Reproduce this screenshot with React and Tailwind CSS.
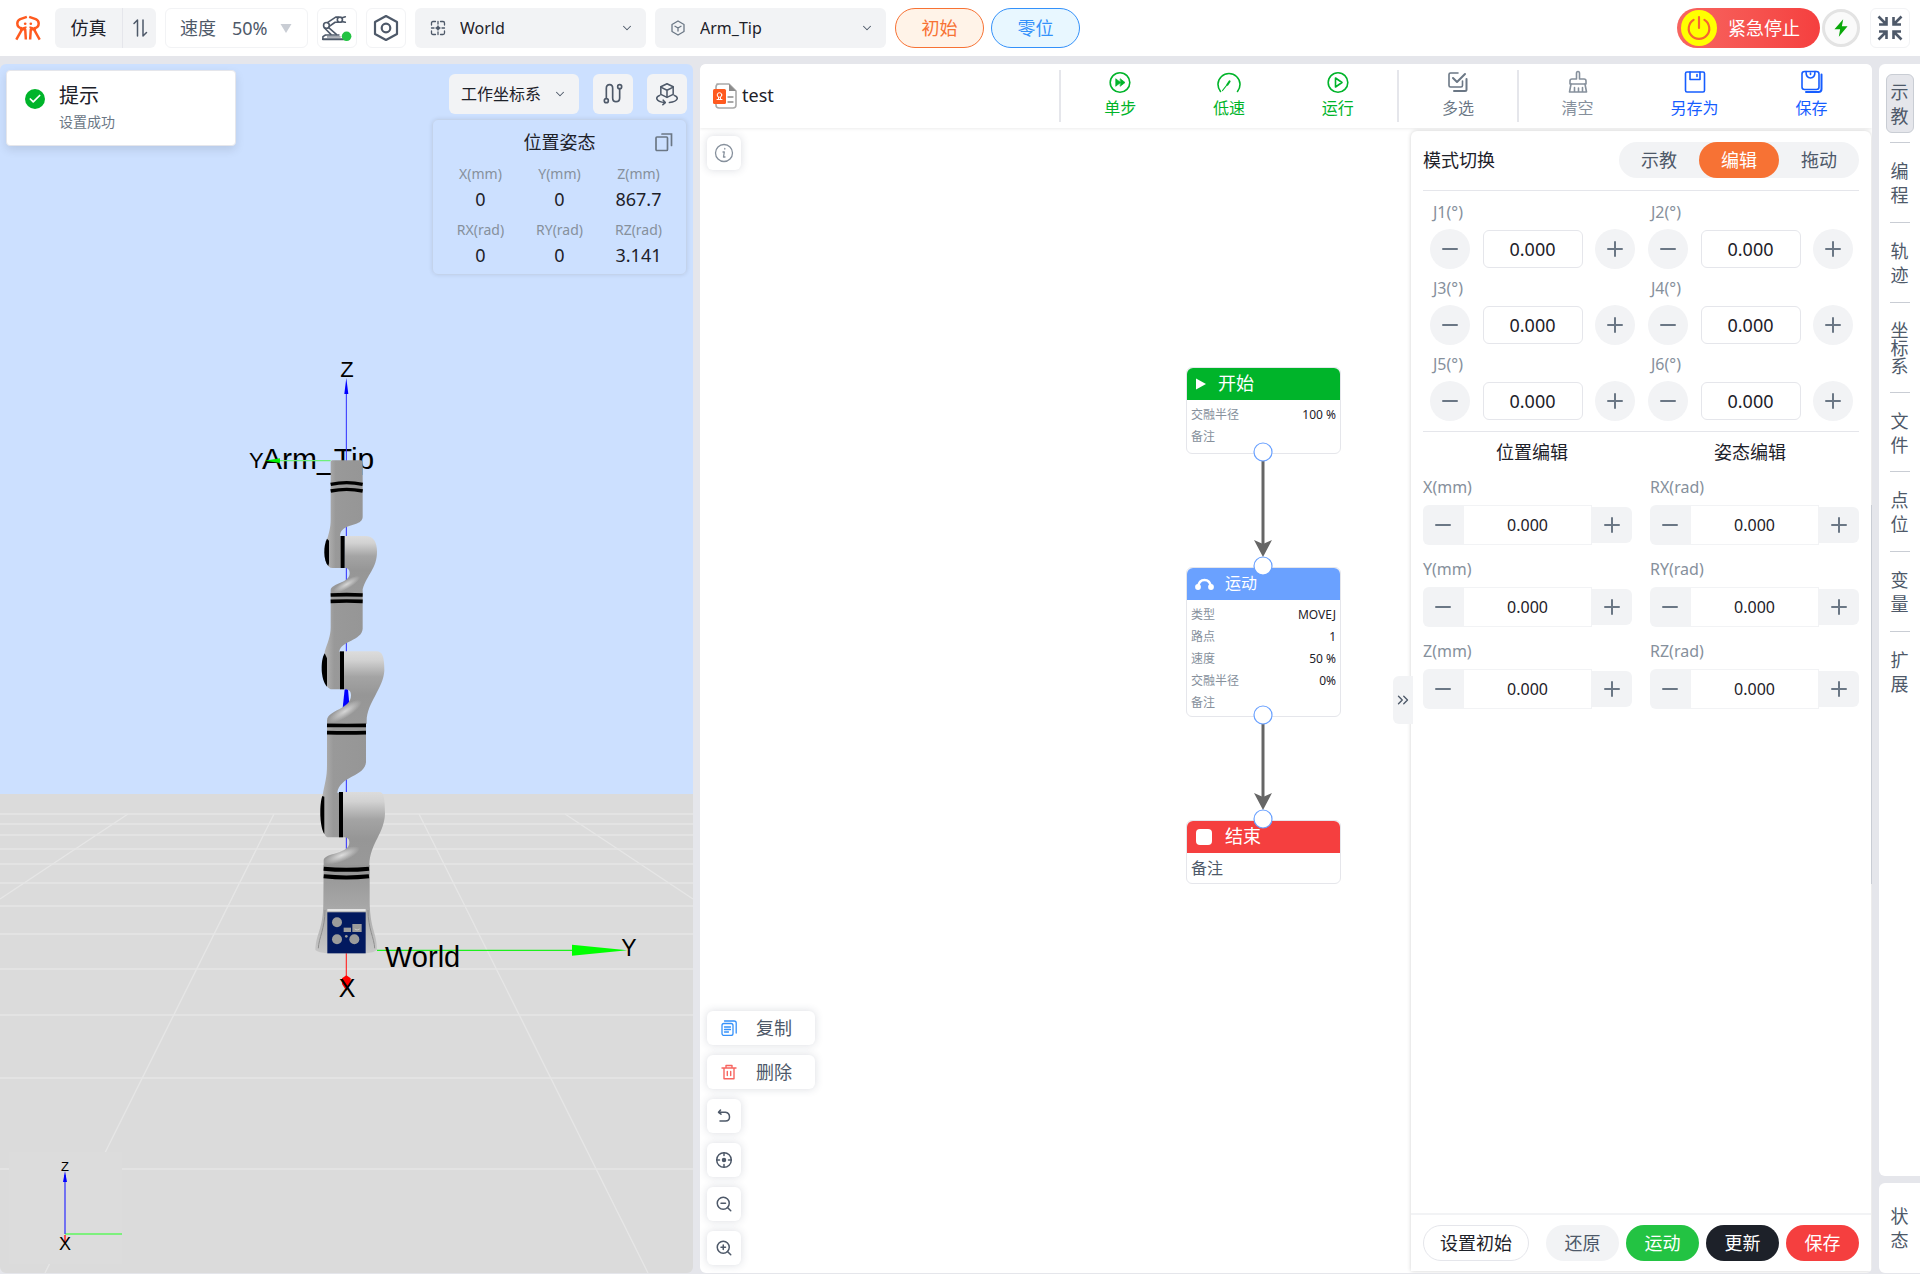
import React, { useState } from "react";
import { ChevronDown, ChevronsRight, Minus, Plus, Check, ZoomIn, ZoomOut } from "lucide-react";

const svgProps = {
  fill: "none",
  stroke: "currentColor",
  strokeLinecap: "round",
  strokeLinejoin: "round",
  "aria-hidden": true,
};

/* ---------- icons ---------- */

function Logo() {
  const half = (
    <>
      <path d="M81 49 L61 56 Q52 60 52 69 Q52 81 66 84" />
      <path d="M60 87 H76 L78 118" />
      <path d="M66 88 L49 118" />
    </>
  );
  return (
    <svg viewBox="42 42 85 82" className="h-7 w-7 text-[#ff5a1f]" {...svgProps} strokeWidth="7.500" strokeLinecap="butt">
      {half}
      <g transform="translate(169 0) scale(-1 1)">{half}</g>
      <path d="M64 85 L80 80 M105 85 L89 80" strokeWidth="5" />
      <circle cx="76" cy="70" r="4" fill="currentColor" stroke="none" />
      <circle cx="93" cy="70" r="4" fill="currentColor" stroke="none" />
    </svg>
  );
}

function SwapIcon() {
  return (
    <svg viewBox="0 0 20 20" className="h-5 w-5" {...svgProps} strokeWidth="1.500">
      <path d="M4 5.500 L7.500 2 V18" />
      <path d="M13 2 V18 L16.500 14.500" />
    </svg>
  );
}

function ArmIcon() {
  return (
    <svg viewBox="970 42 100 84" className="h-7 w-8 text-[#4e5969]" {...svgProps} strokeWidth="5">
      <circle cx="987" cy="76" r="9" />
      <path d="M990 67 L1016 50 H1024 M996 79 L1014 66 H1024" />
      <circle cx="1029" cy="58" r="8" />
      <path d="M1036 52 L1046 49 M1036 64 L1046 66" />
      <path d="M981 84 L1001 104 M994 83 L1018 104" />
      <path d="M976 118 V111 L984 106 H1026" />
      <path d="M976 119 H1040" strokeWidth="6" />
      <path d="M990 112 H1030" strokeWidth="3" />
      <circle cx="1050" cy="110" r="15" fill="#23c343" stroke="none" />
    </svg>
  );
}

function NutIcon() {
  return (
    <svg viewBox="0 0 28 28" className="h-7 w-7 text-[#4e5969]" {...svgProps} strokeWidth="2.200">
      <path d="M14 2 L25 8 V20 L14 26 L3 20 V8 Z" />
      <circle cx="14" cy="14" r="4.300" />
    </svg>
  );
}

function WorldIcon() {
  return (
    <svg viewBox="0 0 16 16" className="h-4 w-4 shrink-0 text-[#4e5969]" {...svgProps} strokeWidth="1.300">
      <path d="M1.500 5 V3 Q1.500 1.500 3 1.500 H5.500 M10.500 1.500 H13 Q14.500 1.500 14.500 3 V5 M14.500 11 V13 Q14.500 14.500 13 14.500 H10.500 M5.500 14.500 H3 Q1.500 14.500 1.500 13 V11" />
      <path d="M8 1.500 V4 M8 12 V14.500 M1.500 8 H4 M12 8 H14.500 M8 6 V10 M6 8 H10" />
      <circle cx="8" cy="8" r="1.200" fill="currentColor" />
    </svg>
  );
}

function HexCubeIcon() {
  return (
    <svg viewBox="0 0 16 16" className="h-4 w-4 shrink-0 text-[#6b7785]" {...svgProps} strokeWidth="1.300">
      <path d="M8 1 L14 4.500 V11.500 L8 15 L2 11.500 V4.500 Z" />
      <path d="M5 6.300 L8 8 L11 6.300 M8 8 V11" />
    </svg>
  );
}

function PathIcon() {
  return (
    <svg viewBox="606 70 66 66" className="h-[22px] w-[22px] text-[#4e5969]" {...svgProps} strokeWidth="5">
      <circle cx="619" cy="123" r="6" />
      <circle cx="659" cy="81" r="6" />
      <path d="M619 116 V86 Q619 75 629 75 Q638 75 638 86 V115 Q638 126 648 126 Q659 126 659 115 V88" />
    </svg>
  );
}

function OrbitIcon() {
  return (
    <svg viewBox="766 68 70 70" className="h-6 w-6 text-[#4e5969]" {...svgProps} strokeWidth="4.500">
      <path d="M801 73 L819 82 V104 L801 113 L783 104 V82 Z" />
      <path d="M783 83 L801 92 L819 83 M801 92 V112" />
      <path d="M780 107 Q770 111 771 117 Q775 127 795 128" />
      <path d="M822 107 Q832 111 831 117 Q827 126 808 128" />
      <path d="M790 121 L796 128 L789 134" />
    </svg>
  );
}

function CopyIcon() {
  return (
    <svg viewBox="0 0 20 20" className="h-5 w-5" {...svgProps} strokeWidth="1.700" strokeLinejoin="miter">
      <rect x="2" y="5" width="11.500" height="13.500" rx="1" />
      <path d="M8 2 H17.500 V13.500" />
    </svg>
  );
}

function FileIcon() {
  return (
    <svg viewBox="0 0 24 26" className="h-[26px] w-6" {...svgProps}>
      <path d="M4 1 H16 L23 8 V22 Q23 25 20 25 H6 Q3 25 3 22 V4 Q3 1 6 1" stroke="#a9a9a9" strokeWidth="1.600" fill="#fff" />
      <path d="M16 1 V8 H23 Z" fill="#8c8c8c" stroke="none" />
      <path d="M15 14 H20 M15 19 H20" stroke="#8c8c8c" strokeWidth="1.300" />
      <rect x="0" y="6" width="13" height="15" rx="1.500" fill="#ff5a1f" stroke="none" />
      <circle cx="6.500" cy="12" r="2.300" stroke="#fff" strokeWidth="1" />
      <path d="M4 16.500 H9 M5.500 14.500 V16 M7.500 14.500 V16" stroke="#fff" strokeWidth="1" />
    </svg>
  );
}

function ToolIcon({ children }) {
  return (
    <svg viewBox="0 0 24 24" className="h-6 w-6" {...svgProps} strokeWidth="1.600">
      {children}
    </svg>
  );
}

const toolIcons = {
  step: (
    <ToolIcon>
      <circle cx="12" cy="12.500" r="9.800" />
      <path d="M8 9 L12.500 12.500 L8 16 Z M12.500 9 L17 12.500 L12.500 16 Z" fill="currentColor" strokeWidth="0.800" />
    </ToolIcon>
  ),
  slow: (
    <ToolIcon>
      <path d="M3.500 21.500 A 11 11 0 1 1 20.500 21.500" />
      <path d="M5.500 20.500 L11.500 13" strokeWidth="1.200" />
      <path d="M10.500 14.500 L12.500 11.500" strokeWidth="2.200" />
    </ToolIcon>
  ),
  run: (
    <ToolIcon>
      <circle cx="12" cy="12.500" r="9.800" />
      <path d="M9.500 8 L16 12.500 L9.500 17 Z" />
    </ToolIcon>
  ),
  multi: (
    <ToolIcon>
      <path d="M12 3 H4.500 Q3 3 3 4.500 V15.500 Q3 17 4.500 17 H15 Q16.500 17 16.500 15.500 V11" />
      <path d="M7 8 L11 12 L19 4" strokeWidth="2" />
      <path d="M20.500 9 V19.500 Q20.500 21 19 21 H8" strokeWidth="2" />
    </ToolIcon>
  ),
  clear: (
    <ToolIcon>
      <path d="M10.500 9 V3.500 Q10.500 1.500 12 1.500 Q13.500 1.500 13.500 3.500 V9 H18 Q20 9 20 11 V14 H4 V11 Q4 9 6 9 Z" />
      <path d="M5 14 L3.500 22 H20.500 L19 14 M8.500 22 V17.500 M12.500 22 V18 M16.500 22 V17.500" />
    </ToolIcon>
  ),
  saveAs: (
    <ToolIcon>
      <rect x="2.500" y="2" width="19" height="20" rx="1.500" />
      <path d="M7 2 V9.500 H17 V2 M14 4.500 V6.500" />
    </ToolIcon>
  ),
  save: (
    <ToolIcon>
      <rect x="2" y="1.500" width="17" height="18" rx="2.500" />
      <path d="M6 1.500 Q6 8 10.500 8 Q15 8 15 1.500 M10.500 3 V4.500" />
      <path d="M21.500 4.500 V19 Q21.500 22 18.500 22 H6" strokeWidth="2" />
    </ToolIcon>
  ),
};

/* ---------- small shared controls ---------- */

function Select({ label, icon, options, className, textClass }) {
  return (
    <label className={`flex h-10 items-center rounded-md bg-[#f2f3f5] ${className}`}>
      {icon}
      <select aria-label={label} className={`min-w-0 flex-1 appearance-none bg-transparent text-base leading-6 text-[#1d2129] outline-none ${textClass}`}>
        {options.map((o) => (
          <option key={o}>{o}</option>
        ))}
      </select>
      <ChevronDown className="h-3.5 w-3.5 shrink-0 text-[#4e5969]" strokeWidth={1.8} />
    </label>
  );
}

/* ---------- header ---------- */

function Header() {
  return (
    <header className="flex h-14 items-center bg-white pr-[10px] pl-[14px]">
      <Logo />
      <div className="ml-[13px] flex h-10 w-[101px] rounded-md bg-[#f2f3f5]">
        <button className="w-[68px] border-r border-[#e5e6eb] text-lg text-[#1d2129]">仿真</button>
        <button aria-label="切换" className="flex flex-1 items-center justify-center text-[#4e5969]">
          <SwapIcon />
        </button>
      </div>
      <label className="ml-[9px] flex h-10 w-[143px] items-center rounded-md border border-[#f2f3f5] pl-[14px] text-lg text-[#4e5969]">
        速度
        <select aria-label="速度" className="ml-4 w-12 appearance-none bg-transparent outline-none">
          <option>50%</option>
          <option>100%</option>
        </select>
        <svg viewBox="0 0 12 9" className="h-[9px] w-3" fill="#c9cdd4" aria-hidden="true">
          <path d="M0.500 0 H11.500 L6 9 Z" />
        </svg>
      </label>
      <button aria-label="机械臂" className="ml-[9px] flex h-10 w-10 items-center justify-center rounded-md border border-[#f2f3f5]">
        <ArmIcon />
      </button>
      <button aria-label="设置" className="ml-[9px] flex h-10 w-10 items-center justify-center rounded-md border border-[#f2f3f5]">
        <NutIcon />
      </button>
      <Select label="工作坐标系选择" icon={<WorldIcon />} options={["World"]} className="ml-[9px] w-[231px] pr-3 pl-[15px]" textClass="ml-[14px]" />
      <Select label="工具坐标系选择" icon={<HexCubeIcon />} options={["Arm_Tip"]} className="ml-[9px] w-[231px] pr-3 pl-[15px]" textClass="ml-[14px]" />
      <button className="ml-[9px] h-10 w-[89px] rounded-full border border-[#f77234] bg-[#fff3e8] text-lg text-[#f77234]">初始</button>
      <button className="ml-[7px] h-10 w-[89px] rounded-full border border-[#3491fa] bg-[#e8f7ff] text-lg text-[#3491fa]">零位</button>

      <button className="ml-auto flex h-10 w-[143px] items-center rounded-full bg-linear-to-r from-[#f76560] to-[#f53f3f] pl-1 text-lg text-white">
        <span className="flex h-9 w-9 items-center justify-center rounded-full bg-[#ffff00]">
          <svg viewBox="0 0 24 24" className="h-[26px] w-[26px] text-[#f7652f]" {...svgProps} strokeWidth="2">
            <path d="M12 2 V12 M7 4.500 A 9.500 9.500 0 1 0 17 4.500" />
          </svg>
        </span>
        <span className="ml-[11px]">紧急停止</span>
      </button>
      <button aria-label="上电" className="ml-0.5 flex h-[38px] w-[38px] items-center justify-center rounded-full border-[3px] border-[#e3e3e3] bg-[#fafafa]">
        <svg viewBox="0 0 16 20" className="h-[18px] w-[14px]" fill="#0aa80a" aria-hidden="true">
          <path d="M10.500 0 L0.500 11.500 H7 L5.500 20 L15.500 8 H9 Z" />
        </svg>
      </button>
      <button aria-label="退出全屏" className="ml-[10px] flex h-10 w-10 items-center justify-center rounded-md border border-[#f2f3f5]">
        <svg viewBox="0 0 26 26" className="h-[26px] w-[26px] text-[#4e5969]" {...svgProps} strokeWidth="2.600" strokeLinecap="butt" strokeLinejoin="miter">
          <path d="M1.500 1.500 L9 9 M9.500 2 V9.500 H2 M24.500 1.500 L17 9 M16.500 2 V9.500 H24 M1.500 24.500 L9 17 M2 16.500 H9.500 V24 M24.500 24.500 L17 17 M24 16.500 H16.500 V24" />
        </svg>
      </button>
    </header>
  );
}

/* ---------- 3D scene ---------- */

function Bands({ x1, x2, ys, w, bow }) {
  return ys.map((y) => (
    <path key={y} d={`M${x1} ${y} Q${(x1 + x2) / 2} ${y + bow} ${x2} ${y}`} stroke="#000" strokeWidth={w} fill="none" />
  ));
}

function Scene() {
  const rows = [814, 824, 835, 849, 864, 883, 906, 934, 969, 1015, 1078, 1169];
  return (
    <svg viewBox="0 64 693 1209" preserveAspectRatio="xMidYMid slice" className="absolute inset-0 h-full w-full" role="img" aria-label="机械臂三维场景">
      <defs>
        <linearGradient id="link" x1="0" x2="1">
          <stop offset="0" stopColor="#b4b4b4" />
          <stop offset="0.250" stopColor="#999" />
          <stop offset="1" stopColor="#969696" />
        </linearGradient>
        <linearGradient id="drum" x1="0" y1="0" x2="0" y2="1">
          <stop offset="0" stopColor="#dcdcdc" />
          <stop offset="0.120" stopColor="#d2d2d2" />
          <stop offset="0.350" stopColor="#a4a4a4" />
          <stop offset="0.600" stopColor="#969696" />
          <stop offset="1" stopColor="#999" />
        </linearGradient>
        <radialGradient id="shine">
          <stop offset="0" stopColor="#e6e6e6" />
          <stop offset="1" stopColor="#e6e6e6" stopOpacity="0" />
        </radialGradient>
        <linearGradient id="base" x1="0" y1="0" x2="0" y2="1">
          <stop offset="0" stopColor="#949494" />
          <stop offset="0.450" stopColor="#a6a6a6" />
          <stop offset="1" stopColor="#c8c8c8" />
        </linearGradient>
      </defs>
      <rect x="-2000" y="-1000" width="5000" height="1794" fill="#cce0ff" />
      <rect x="-2000" y="794" width="5000" height="2000" fill="#dbdbdb" />
      <g stroke="#e6e6e6" strokeWidth="1.300">
        {rows.map((y) => (
          <path key={y} d={`M-600 ${y} H1300`} />
        ))}
        <path d="M128 814 L0 899 M274 814 L45 1273 M419 814 L648 1273 M565 814 L693 899" />
      </g>

      <g fontFamily="'Liberation Sans', Arial, sans-serif" fill="#000">
        <text x="347" y="377" fontSize="22" textAnchor="middle">Z</text>
        <text x="249" y="468" fontSize="22">Y</text>
        <text x="262" y="469" fontSize="30">Arm_Tip</text>
      </g>

      <g transform="translate(230 350) scale(0.33333)">
        <path d="M349 110 V1700" stroke="#2b2bff" strokeWidth="3" />
        <path d="M349 84 L343 132 H355 Z" fill="#00f" />
        <path d="M150 332 H302" stroke="#6ef07a" strokeWidth="4" />
        <path d="M104 332 L150 325 V339 Z" fill="#00f000" />
        <path d="M344 1018 H354 L358 1062 L338 1074 Z" fill="#00f" />
        <path d="M441 1801 H1030" stroke="#1cf01c" strokeWidth="3.500" />
        <path d="M1026 1784 L1192 1801 L1026 1817 Z" fill="#0f0" />
        <path d="M349 1800 V1885" stroke="#ff2a2a" strokeWidth="3.500" />
        <path d="M349 1876 L362 1885 V1902 L349 1922 L336 1902 V1885 Z" fill="#f00" />

        {/* wrist */}
        <path d="M302 336 Q302 331 307 331 H393 Q398 331 398 336 V500 C398 524 360 522 341 536 C332 543 330 550 330 558 H334 V654 H308 C298 654 292 648 290 636 V572 C297 548 302 535 302 506 Z" fill="url(#link)" />
        <path d="M291 566 C280 585 279 632 295 648 L297 640 V572 Z" fill="#000" />
        <path d="M344 558 H405 C431 558 441 576 441 605 C441 655 410 675 398 718 V730 H302 V720 C304 700 359 700 359 670 C359 660 355 654 344 654 Z" fill="url(#drum)" />
        <ellipse cx="350" cy="703" rx="46" ry="13" transform="rotate(-30 350 703)" fill="url(#shine)" opacity="0.800" />
        <rect x="332" y="558" width="12" height="96" />
        <Bands x1={302} x2={398} ys={[403, 423]} w={10} bow={-10} />

        {/* forearm */}
        <path d="M302 728 H398 V836 C396 872 332 872 328 905 H332 V1018 H306 C294 1018 288 1006 284 990 V905 C292 880 302 860 302 832 Z" fill="url(#link)" />
        <path d="M284 910 C271 930 271 990 291 1010 V925 Z" fill="#000" />
        <path d="M342 904 H440 C458 904 463 922 463 962 C460 1015 411 1058 410 1112 V1122 H291 V1112 C293 1078 363 1080 363 1036 C363 1022 355 1018 342 1018 Z" fill="url(#drum)" />
        <ellipse cx="345" cy="1084" rx="58" ry="18" transform="rotate(-32 345 1084)" fill="url(#shine)" opacity="0.800" />
        <rect x="330" y="904" width="12" height="114" />
        <Bands x1={302} x2={398} ys={[735, 754]} w={11} bow={-2} />

        {/* upper arm */}
        <path d="M291 1120 H408 V1236 C406 1280 328 1278 322 1328 H328 V1462 H296 C286 1462 282 1450 277 1436 V1340 C284 1300 291 1285 291 1245 Z" fill="url(#link)" />
        <path d="M277 1338 C268 1360 268 1430 283 1452 V1340 Z" fill="#000" />
        <path d="M339 1326 H448 C460 1326 465 1340 465 1390 C464 1450 420 1480 418 1545 V1560 H281 V1530 C284 1508 358 1512 358 1478 C358 1466 353 1462 339 1462 Z" fill="url(#drum)" />
        <ellipse cx="335" cy="1516" rx="58" ry="18" transform="rotate(-22 335 1516)" fill="url(#shine)" opacity="0.900" />
        <rect x="327" y="1326" width="12" height="136" />
        <Bands x1={291} x2={408} ys={[1126, 1148]} w={11} bow={1} />

        {/* pedestal */}
        <path d="M281 1545 H419 V1660 C421 1740 441 1750 441 1800 Q430 1808 408 1810 H291 Q266 1808 256 1800 C258 1750 279 1740 280 1660 Z" fill="url(#base)" />
        <path d="M285 1680 C285 1735 266 1765 265 1795 M414 1680 C414 1735 433 1765 434 1795" stroke="#8f8f8f" strokeWidth="3" fill="none" />
        <rect x="292" y="1677" width="115" height="7" fill="#e4e4e4" />
        <rect x="292" y="1687" width="115" height="123" fill="#02195f" />
        <g fill="#9b9b9b">
          <circle cx="321" cy="1717" r="15" />
          <circle cx="321" cy="1768" r="15" />
          <circle cx="373" cy="1768" r="15" />
          <circle cx="349" cy="1759" r="4" />
          <rect x="341" y="1733" width="22" height="13" />
          <rect x="367" y="1722" width="28" height="24" />
        </g>
        <path d="M374 1737 Q381 1743 389 1737" stroke="#ddd" strokeWidth="2" fill="none" />
        <Bands x1={281} x2={417} ys={[1556, 1579]} w={12} bow={7} />
      </g>

      <g fontFamily="'Liberation Sans', Arial, sans-serif" fill="#000">
        <text x="385" y="967" fontSize="29">World</text>
        <text x="629" y="956" fontSize="23" textAnchor="middle">Y</text>
        <text x="347" y="997" fontSize="25" textAnchor="middle">X</text>
      </g>

      <g>
        <rect x="9" y="1152" width="113" height="112" fill="#dcdcdc" />
        <path d="M65 1234 H122" stroke="#7df07d" strokeWidth="2" />
        <path d="M65 1175 V1234" stroke="#2b2bff" strokeWidth="1.200" />
        <path d="M65 1171 L63 1182 H67 Z" fill="#00f" />
        <path d="M65 1235 V1244" stroke="#f22" strokeWidth="1.500" />
        <g fontFamily="'Liberation Sans', Arial, sans-serif" textAnchor="middle">
          <text x="65" y="1171" fontSize="13">Z</text>
          <text x="65" y="1250" fontSize="18">X</text>
        </g>
      </g>
    </svg>
  );
}

const pose = [
  ["X(mm)", "0"],
  ["Y(mm)", "0"],
  ["Z(mm)", "867.7"],
  ["RX(rad)", "0"],
  ["RY(rad)", "0"],
  ["RZ(rad)", "3.141"],
];

function SceneOverlay() {
  return (
    <div className="relative flex items-start justify-between p-1.5">
      <div role="status" className="flex h-[76px] w-[230px] rounded border border-[#e5e6eb] bg-white pt-3 pl-[18px] shadow-[0_4px_10px_rgba(0,0,0,0.1)]">
        <span className="mt-[6px] flex h-5 w-5 items-center justify-center rounded-full bg-[#00b42a] text-white">
          <Check className="h-3.5 w-3.5" strokeWidth={3} />
        </span>
        <div className="ml-[14px]">
          <p className="text-xl leading-[26px] text-[#1d2129]">提示</p>
          <p className="text-sm leading-[26px] text-[#6b7785]">设置成功</p>
        </div>
      </div>
      <div className="mt-1 flex w-[255px] flex-col items-end gap-[5px]">
        <div className="flex gap-[14px]">
          <Select label="坐标系" options={["工作坐标系"]} className="w-[130px] pr-3 pl-3" textClass="" />
          <button aria-label="轨迹显示" className="flex h-10 w-10 items-center justify-center rounded-md bg-[#f2f3f5]">
            <PathIcon />
          </button>
          <button aria-label="视角旋转" className="flex h-10 w-10 items-center justify-center rounded-md bg-[#f2f3f5]">
            <OrbitIcon />
          </button>
        </div>
        <section className="w-full rounded-md border border-[#c3d3ec] px-2 pt-2 pb-1.5 shadow-[0_0_4px_rgba(0,0,0,0.1)]">
          <div className="grid h-7 grid-cols-[24px_1fr_24px] items-center">
            <h2 className="col-start-2 text-center text-lg leading-7 text-[#1d2129]">位置姿态</h2>
            <button aria-label="复制位姿" className="text-[#6b7785]">
              <CopyIcon />
            </button>
          </div>
          <dl className="mt-1.5 grid grid-cols-3 gap-y-1.5 text-center">
            {pose.map(([k, v]) => (
              <div key={k}>
                <dt className="text-sm leading-6 text-[#86909c]">{k}</dt>
                <dd className="text-lg leading-[26px] text-[#1d2129]">{v}</dd>
              </div>
            ))}
          </dl>
        </section>
      </div>
    </div>
  );
}

/* ---------- flow editor ---------- */

const tools = [
  [["step", "单步"], ["slow", "低速"], ["run", "运行"]],
  [["multi", "多选"]],
  [["clear", "清空"], ["saveAs", "另存为"], ["save", "保存"]],
];
const toolGroupClass = ["w-[338px] px-[5px] text-[#00b42a]", "w-[120px] text-[#6b7785]", "w-[355px] pr-0.5 text-[#165dff]"];

function Toolbar() {
  return (
    <div className="relative z-10 flex h-16 items-center bg-white shadow-[0_1px_3px_rgba(0,0,0,0.08)]">
      <div className="flex min-w-0 flex-1 items-center gap-[5px] pl-[13px]">
        <FileIcon />
        <h1 className="pb-0.5 text-lg leading-7 text-[#1d2129]">test</h1>
      </div>
      {tools.map((group, i) => (
        <div key={i} className={`flex h-[52px] border-l-2 border-[#e5e6eb] ${toolGroupClass[i]}`}>
          {group.map(([id, name]) => (
            <button key={id} className={`flex flex-1 flex-col items-center text-base leading-6 ${id === "clear" ? "text-[#86909c]" : ""}`}>
              {toolIcons[id]}
              <span className="mt-0.5">{name}</span>
            </button>
          ))}
        </div>
      ))}
    </div>
  );
}

function FlowNode({ className, headClass, icon, title, titleClass, rows, children }) {
  return (
    <article className={`absolute w-[155px] rounded-md border border-[#e5e6eb] bg-white ${className}`}>
      <header className={`flex h-8 items-center rounded-t-md text-white ${headClass}`}>
        {icon}
        <span className={`pb-0.5 ${titleClass}`}>{title}</span>
      </header>
      {rows && (
        <dl className="px-1 pt-1 pb-0.5 text-xs leading-[22px]">
          {rows.map(([k, v]) => (
            <div key={k} className="flex justify-between">
              <dt className="text-[#86909c]">{k}</dt>
              <dd className="text-[#1d2129]">{v}</dd>
            </div>
          ))}
        </dl>
      )}
      {children}
    </article>
  );
}

function Flow() {
  return (
    <div className="absolute inset-0 overflow-hidden">
      <FlowNode
        className="top-[239px] left-[486px] pb-[3px]"
        headClass="bg-[#00b42a] pl-[9px]"
        icon={<svg viewBox="0 0 10 12" className="h-3 w-2.5" fill="#fff"><path d="M0 0.500 L10 6 L0 11.500 Z" /></svg>}
        title="开始"
        titleClass="ml-3 text-lg"
        rows={[["交融半径", "100 %"], ["备注", ""]]}
      />
      <FlowNode
        className="top-[439px] left-[486px]"
        headClass="bg-[#6aa1ff] pl-2"
        icon={
          <svg viewBox="0 0 19 12" className="h-3 w-[19px]" fill="#fff">
            <path d="M3 9 Q4 2 9.500 2 Q15 2 16 9" fill="none" stroke="#fff" strokeWidth="2.400" />
            <circle cx="3" cy="9" r="2.900" />
            <circle cx="16" cy="9" r="2.900" />
          </svg>
        }
        title="运动"
        titleClass="ml-[11px] text-base"
        rows={[["类型", "MOVEJ"], ["路点", "1"], ["速度", "50 %"], ["交融半径", "0%"], ["备注", ""]]}
      />
      <FlowNode
        className="top-[692px] left-[486px]"
        headClass="bg-[#f53f3f] pl-[9px]"
        icon={<span className="h-4 w-4 rounded bg-white" />}
        title="结束"
        titleClass="ml-[13px] text-lg"
      >
        <p className="px-1 text-base leading-[30px] text-[#4e5969]">备注</p>
      </FlowNode>
      <svg width="600" height="800" className="pointer-events-none absolute top-0 left-0" aria-hidden="true">
        <g stroke="#666" strokeWidth="3">
          <path d="M563 323 V418" />
          <path d="M563 587 V671" />
        </g>
        <path d="M563 429 L554 412 L563 416 L572 412 Z M563 682 L554 665 L563 669 L572 665 Z" fill="#666" />
        <g fill="#fff" stroke="#6aa1ff" strokeWidth="1.200">
          <circle cx="563" cy="324" r="9" />
          <circle cx="563" cy="438" r="9" />
          <circle cx="563" cy="587" r="9" />
          <circle cx="563" cy="691" r="9" />
        </g>
      </svg>
    </div>
  );
}

const floatBtn = "flex h-[34px] items-center rounded-md bg-white text-[#4e5969] shadow-[0_0_8px_rgba(50,60,90,0.18)]";

function FloatingTools() {
  return (
    <div className="relative flex w-[122px] flex-1 flex-col items-start gap-2.5 px-[7px] py-2">
      <button aria-label="说明" className={`${floatBtn} mb-auto w-[34px] justify-center`}>
        <svg viewBox="0 0 20 20" className="h-5 w-5 text-[#86909c]" {...svgProps} strokeWidth="1.300">
          <circle cx="10" cy="10" r="8.500" />
          <path d="M10.800 5.500 V6 M9 9 H10.300 L9.500 14 H11" />
        </svg>
      </button>
      <button className={`${floatBtn} w-[108px] gap-[19px] pl-3.5 text-lg`}>
        <svg viewBox="0 0 16 16" className="h-4 w-4 text-[#3491fa]" {...svgProps} strokeWidth="1.300">
          <rect x="1" y="3.500" width="11" height="12" rx="2" />
          <path d="M3.500 1 H13 Q15.200 1 15.200 3 V13 M3.500 7 H9.500 M3.500 9.500 H9.500 M3.500 12 H7.500" />
        </svg>
        复制
      </button>
      <button className={`${floatBtn} w-[108px] gap-[19px] pl-3.5 text-lg`}>
        <svg viewBox="0 0 16 16" className="h-4 w-4 text-[#f76560]" {...svgProps} strokeWidth="1.400">
          <path d="M1 4 H15 M5 4 V1.500 H11 V4 M3 4 V14.800 H13 V4 M6.300 7.500 V11.500 M9.700 7.500 V11.500" />
        </svg>
        删除
      </button>
      <button aria-label="撤销" className={`${floatBtn} w-[34px] justify-center`}>
        <svg viewBox="0 0 16 16" className="h-4 w-4" {...svgProps} strokeWidth="1.500">
          <path d="M4.500 2 L2.500 4.300 L5 6.200 M2.800 4.300 H9.500 Q13.500 4.800 13.500 9 Q13.500 13 9.500 13 H4" />
        </svg>
      </button>
      <button aria-label="居中" className={`${floatBtn} w-[34px] justify-center`}>
        <svg viewBox="0 0 18 18" className="h-[18px] w-[18px]" {...svgProps} strokeWidth="1.500">
          <circle cx="9" cy="9" r="7.300" />
          <path d="M9 2 V4.500 M9 13.500 V16 M2 9 H4.500 M13.500 9 H16" />
          <circle cx="9" cy="9" r="1.500" fill="currentColor" />
        </svg>
      </button>
      <button aria-label="缩小" className={`${floatBtn} w-[34px] justify-center`}>
        <ZoomOut className="h-[18px] w-[18px]" strokeWidth={2} />
      </button>
      <button aria-label="放大" className={`${floatBtn} w-[34px] justify-center`}>
        <ZoomIn className="h-[18px] w-[18px]" strokeWidth={2} />
      </button>
    </div>
  );
}

/* ---------- edit panel ---------- */

function JointField({ name }) {
  return (
    <div className="h-[76px] pr-[6px] pl-[7px]">
      <label htmlFor={name} className="block pl-[3px] text-base leading-6 text-[#86909c]">{`${name}(°)`}</label>
      <div className="mt-[5px] flex items-center justify-between">
        <button aria-label={`${name} 减`} className="flex h-10 w-10 items-center justify-center rounded-full bg-[#f2f3f5] text-[#6b7785]">
          <Minus strokeWidth={2} />
        </button>
        <input id={name} defaultValue="0.000" className="h-[38px] w-[100px] rounded-md border border-[#e5e6eb] text-center text-lg text-[#1d2129] outline-none" />
        <button aria-label={`${name} 加`} className="flex h-10 w-10 items-center justify-center rounded-full bg-[#f2f3f5] text-[#6b7785]">
          <Plus strokeWidth={2} />
        </button>
      </div>
    </div>
  );
}

function CoordField({ name }) {
  return (
    <div className="h-[82px]">
      <label htmlFor={name} className="block text-base leading-6 text-[#86909c]">{name}</label>
      <div className="mt-1.5 flex items-center">
        <button aria-label={`${name} 减`} className="flex h-10 w-10 items-center justify-center rounded-l-md bg-[#f2f3f5] text-[#6b7785]">
          <Minus strokeWidth={2} />
        </button>
        <input id={name} defaultValue="0.000" className="h-10 min-w-0 flex-1 border border-[#f2f3f5] text-center text-base text-[#1d2129] outline-none" />
        <button aria-label={`${name} 加`} className="flex h-9 w-10 items-center justify-center rounded-r-md bg-[#f2f3f5] text-[#6b7785]">
          <Plus strokeWidth={2} />
        </button>
      </div>
    </div>
  );
}

function EditPanel() {
  const [mode, setMode] = useState("编辑");
  return (
    <aside className="relative mt-[3px] mr-px mb-0.5 flex w-[460px] shrink-0 flex-col rounded-t-md bg-white shadow-[0_0_4px_rgba(0,0,0,0.18)]">
      <button aria-label="收起" className="absolute top-[545px] -left-[18px] flex h-12 w-5 items-center justify-center rounded-l-md bg-[#f2f3f5] text-[#4e5969]">
        <ChevronsRight className="h-[18px] w-[18px]" strokeWidth={1.8} />
      </button>
      <span className="absolute top-[374px] -right-px h-[379px] w-px bg-[#c9cdd4]" />
      <div className="flex-1 px-3 pt-[11px]">
        <div className="flex h-[49px] items-start justify-between border-b border-[#e5e6eb]">
          <h2 className="text-lg leading-9 text-[#1d2129]">模式切换</h2>
          <div className="flex h-9 rounded-full bg-[#f2f3f5]">
            {["示教", "编辑", "拖动"].map((m) => (
              <button key={m} onClick={() => setMode(m)} className={`w-20 rounded-full text-lg leading-9 ${m === mode ? "bg-[#f77234] text-white" : "text-[#4e5969]"}`}>
                {m}
              </button>
            ))}
          </div>
        </div>
        <div className="grid grid-cols-2 border-b border-[#e5e6eb] pt-[9px] pb-[3px]">
          {["J1", "J2", "J3", "J4", "J5", "J6"].map((n) => (
            <JointField key={n} name={n} />
          ))}
        </div>
        <div className="grid grid-cols-2 pt-[5px] text-center text-lg leading-[30px] text-[#1d2129]">
          <h3>位置编辑</h3>
          <h3>姿态编辑</h3>
        </div>
        <div className="mt-2 grid grid-cols-2 gap-x-[18px]">
          {["X(mm)", "RX(rad)", "Y(mm)", "RY(rad)", "Z(mm)", "RZ(rad)"].map((n) => (
            <CoordField key={n} name={n} />
          ))}
        </div>
      </div>
      <footer className="flex h-[58px] items-center gap-[7px] border-t-2 border-[#f2f3f5] px-3 pb-px text-lg">
        <button className="mr-auto h-9 w-[106px] rounded-full border border-[#e5e6eb] text-[#1d2129]">设置初始</button>
        <button className="h-9 w-[73px] rounded-full bg-[#f2f3f5] text-[#4e5969]">还原</button>
        <button className="h-9 w-[73px] rounded-full bg-[#23c343] text-white">运动</button>
        <button className="h-9 w-[73px] rounded-full bg-[#1d2129] text-white">更新</button>
        <button className="h-9 w-[73px] rounded-full bg-[#f53f3f] text-white">保存</button>
      </footer>
    </aside>
  );
}

/* ---------- right rail ---------- */

function RailText({ text, tight }) {
  return (
    <span className={`flex flex-col items-center text-lg ${tight ? "leading-[18px]" : "leading-6"}`}>
      {[...text].map((c) => (
        <span key={c}>{c}</span>
      ))}
    </span>
  );
}

function Rail() {
  const items = ["示教", "编程", "轨迹", "坐标系", "文件", "点位", "变量", "扩展"];
  return (
    <div className="flex w-[41px] shrink-0 flex-col gap-[7px]">
      <nav className="flex flex-1 flex-col items-center rounded-l-md bg-white pt-[10px] text-[#4e5969]">
        {items.map((t, i) => (
          <React.Fragment key={t}>
            {i > 0 && <hr className={`mb-[10px] w-5 border-[#c9cdd4] ${i === 1 || i === 5 ? "mt-[9px]" : "mt-[10px]"}`} />}
            <button
              className={`flex w-7 items-center justify-center rounded-md ${t.length > 2 ? "h-[69px]" : "h-[59px]"} ${i === 0 ? "border border-[#c9cdd4] bg-[#e5e6eb]" : ""}`}
            >
              <RailText text={t} tight={t.length > 2} />
            </button>
          </React.Fragment>
        ))}
      </nav>
      <button className="flex h-[90px] items-center justify-center rounded-l-md bg-white text-[#4e5969]">
        <RailText text="状态" />
      </button>
    </div>
  );
}

export default function App() {
  return (
    <div className="flex min-h-screen flex-col bg-[#e5e6eb] font-['Noto_Sans','Noto_Sans_CJK_SC',sans-serif]">
      <Header />
      <main className="flex flex-1 gap-[7px] pt-2 pb-px">
        <section className="relative min-w-0 flex-[693] overflow-hidden rounded-md">
          <Scene />
          <SceneOverlay />
        </section>
        <section className="flex min-w-0 flex-[1172] flex-col overflow-hidden rounded-md bg-white">
          <Toolbar />
          <div className="flex flex-1">
            <div className="relative flex min-w-0 flex-1">
              <Flow />
              <FloatingTools />
            </div>
            <EditPanel />
          </div>
        </section>
        <Rail />
      </main>
    </div>
  );
}
